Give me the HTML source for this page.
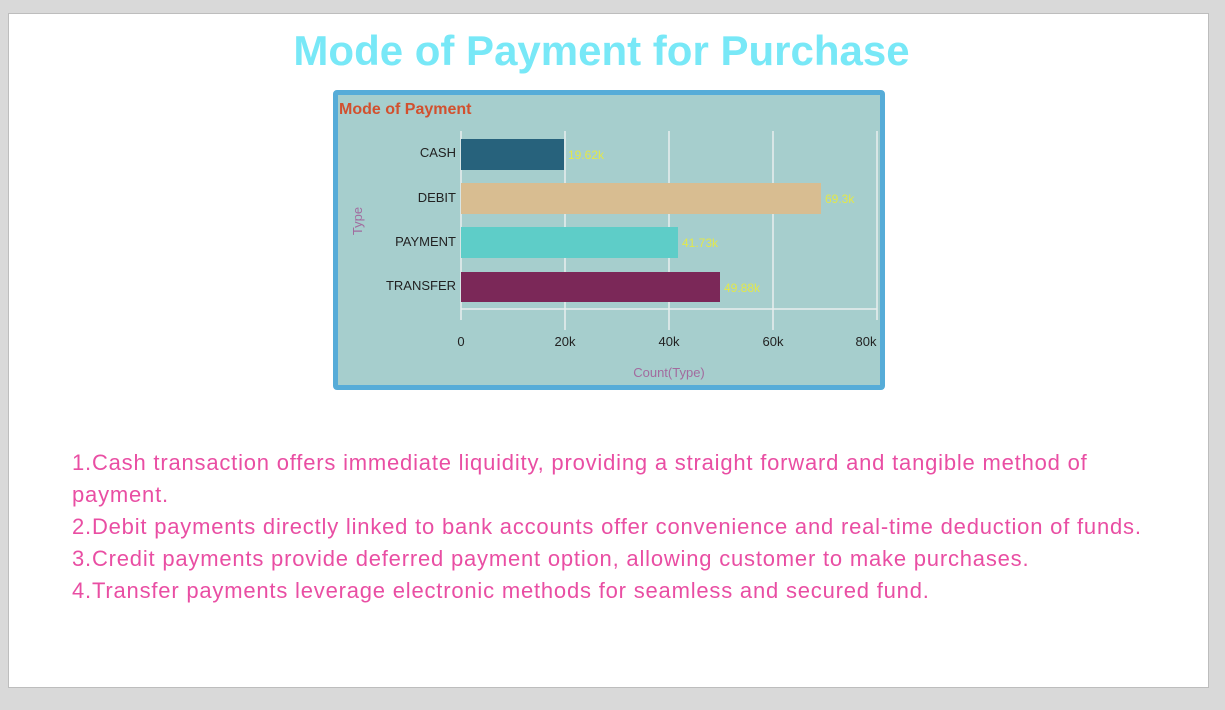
<!DOCTYPE html>
<html><head><meta charset="utf-8"><style>
html,body{margin:0;padding:0;width:1225px;height:710px;background:#d9d9d9;overflow:hidden;font-family:"Liberation Sans",sans-serif}
.panel{position:absolute;left:8px;top:13px;width:1199px;height:673px;background:#fff;border:1px solid #bdbdbd}
.title{position:absolute;left:-11px;width:1225px;top:27px;text-align:center;font-size:42px;font-weight:bold;color:#78e8f7}
.chart{position:absolute;left:333px;top:90px;width:542px;height:290px;border:5px solid #56acd8;border-radius:4px;background:#a6cecd}
.txt{position:absolute;left:72px;top:447px;font-size:22px;letter-spacing:0.8px;line-height:32px;color:#e94ea3;white-space:nowrap}
</style></head><body>
<div class="panel"></div>
<div class="title">Mode of Payment for Purchase</div>
<div class="chart"></div>
<svg style="position:absolute;left:0;top:0" width="1225" height="710" font-family="Liberation Sans, sans-serif">
<text x="339" y="114" font-size="16" font-weight="bold" fill="#d2502e">Mode of Payment</text>
<g stroke="#e8eeee" stroke-width="1.5">
<line x1="565" y1="131" x2="565" y2="330"/><line x1="669" y1="131" x2="669" y2="330"/><line x1="773" y1="131" x2="773" y2="330"/><line x1="877" y1="131" x2="877" y2="320"/>
<line x1="461" y1="131" x2="461" y2="320"/><line x1="461" y1="309" x2="877" y2="309"/>
</g>
<rect x="461" y="139" width="103" height="31" fill="#27627c"/>
<rect x="461" y="183" width="360" height="31" fill="#d8bd91"/>
<rect x="461" y="227" width="217" height="31" fill="#5ecdc8"/>
<rect x="461" y="272" width="259" height="30" fill="#7b2858"/>
<g font-size="12" fill="#e3e84a">
<text x="568" y="159">19.62k</text><text x="825" y="203">69.3k</text><text x="682" y="247">41.73k</text><text x="724" y="292">49.88k</text>
</g>
<g font-size="13" fill="#222" text-anchor="end">
<text x="456" y="157">CASH</text><text x="456" y="202">DEBIT</text><text x="456" y="246">PAYMENT</text><text x="456" y="290">TRANSFER</text>
</g>
<g font-size="13" fill="#222" text-anchor="middle">
<text x="461" y="346">0</text><text x="565" y="346">20k</text><text x="669" y="346">40k</text><text x="773" y="346">60k</text><text x="866" y="346">80k</text>
</g>
<text x="669" y="377" font-size="13" fill="#a26b9e" text-anchor="middle">Count(Type)</text>
<text transform="translate(362,221) rotate(-90)" font-size="13" fill="#a26b9e" text-anchor="middle">Type</text>
</svg>
<div class="txt">1.Cash transaction offers immediate liquidity, providing a straight forward and tangible method of<br>payment.<br>2.Debit payments directly linked to bank accounts offer convenience and real-time deduction of funds.<br>3.Credit payments provide deferred payment option, allowing customer to make purchases.<br>4.Transfer payments leverage electronic methods for seamless and secured fund.</div>
</body></html>
